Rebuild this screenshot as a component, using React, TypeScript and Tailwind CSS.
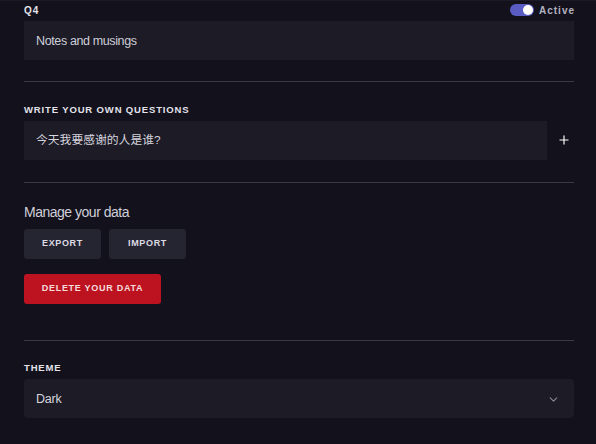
import { ChevronDown, Plus } from "lucide-react";

export default function App() {
    return (
        <div
            className="w-[596px] h-[444px] overflow-hidden bg-[#12111c] border-t border-[#1b1a26] pl-6 pr-[22px] text-[#d6d5de]"
            style={{ fontFamily: '"Liberation Sans", "Noto Sans CJK SC", sans-serif' }}
        >
            {/* Q4 */}
            <div className="mt-[3px] h-[12px] flex items-center justify-between">
                <span className="text-[10px] font-bold tracking-[0.1em] text-[#e4e3ea]">Q4</span>
                <div className="flex items-center gap-[5px] -mr-[1px]">
                    <div className="w-[24px] h-[12px] rounded-full bg-[#5a5cc4] flex items-center justify-end pr-[1px]">
                        <div className="w-[10px] h-[10px] rounded-full bg-white" />
                    </div>
                    <span className="text-[10px] font-bold tracking-[0.1em] text-[#b4b3c0]">Active</span>
                </div>
            </div>
            <div className="mt-[5px] h-[39px] bg-[#1c1b26] flex items-center pl-3 pt-px text-[12.5px] tracking-[-0.03em] text-[#cfced8]">
                Notes and musings
            </div>

            <div className="mt-[21px] h-px bg-[#3a3947]" />

            {/* Own questions */}
            <div className="mt-[22px] h-[12px] flex items-center text-[9.5px] font-bold tracking-[0.09em] text-[#e4e3ea]">
                WRITE YOUR OWN QUESTIONS
            </div>
            <div className="mt-[5px] flex items-center">
                <div className="flex-1 h-[39px] bg-[#1c1b26] flex items-center pl-3 pt-px text-[11.8px] text-[#d6d5de]">
                    今天我要感谢的人是谁?
                </div>
                <div className="w-[27px] flex justify-end pr-[3px] -mt-[2px]">
                    <Plus size={14} strokeWidth={2} className="text-white" />
                </div>
            </div>

            <div className="mt-[22px] h-px bg-[#3a3947]" />

            {/* Manage data */}
            <div className="mt-[20px] h-[18px] flex items-center text-[14px] tracking-[-0.035em] text-[#cfced8]">Manage your data</div>
            <div className="mt-[8px] flex gap-2">
                <button className="w-[77px] h-[30px] rounded-[3px] bg-[#252431] text-[9px] font-bold tracking-[0.07em] text-[#dcdbe3]">
                    EXPORT
                </button>
                <button className="w-[77px] h-[30px] rounded-[3px] bg-[#252431] text-[9px] font-bold tracking-[0.07em] text-[#dcdbe3]">
                    IMPORT
                </button>
            </div>
            <button className="mt-[15px] w-[137px] h-[30px] rounded-[3px] bg-[#bd1320] text-[9px] font-bold tracking-[0.08em] text-[#f4dcdd]">
                DELETE YOUR DATA
            </button>

            <div className="mt-[36px] h-px bg-[#3a3947]" />

            {/* Theme */}
            <div className="mt-[21px] h-[12px] flex items-center text-[9.5px] font-bold tracking-[0.09em] text-[#e4e3ea]">
                THEME
            </div>
            <div className="mt-[5px] h-[39px] rounded-[4px] bg-[#1c1b26] flex items-center justify-between pl-3 pr-[14px] pt-px text-[12.5px] tracking-[-0.02em] text-[#d6d5de]">
                <span>Dark</span>
                <ChevronDown size={13} strokeWidth={2} className="text-[#8b8a98] mt-px" />
            </div>
        </div>
    );
}
